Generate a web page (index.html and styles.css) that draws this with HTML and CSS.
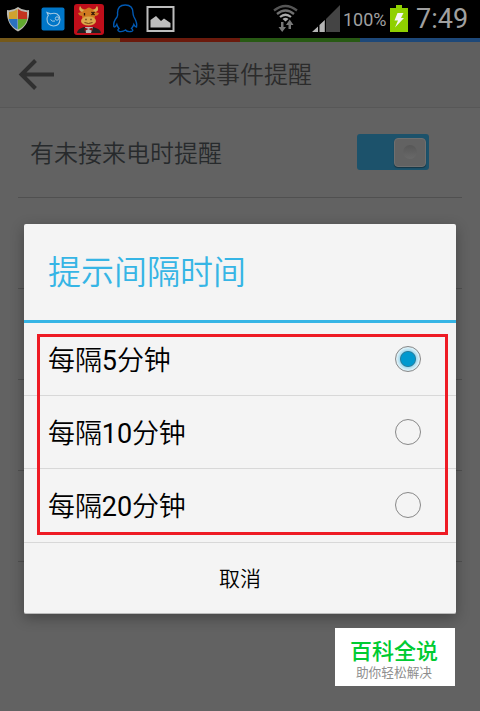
FILE: index.html
```
<!DOCTYPE html>
<html lang="zh-CN">
<head>
	<meta charset="utf-8">
	<title>未读事件提醒</title>
	<link rel="stylesheet" href="styles.css">
</head>
<body>
	<div class="statusbar">
		<svg class="status-left" width="180" height="38" viewBox="0 0 180 38">
			<!-- shield -->
			<path d="M18 7 Q23 11 29 10 Q30 25 18 31.500 Q6 25 7 10 Q13 11 18 7Z" fill="#b9b9b2"/>
			<path d="M17.500 9 Q13 12.500 9 12 L8.800 19 H17.500Z" fill="#d0a22f"/>
			<path d="M18 9 Q22 12.500 27 12 L27.200 19 H18Z" fill="#c4331e"/>
			<path d="M8.800 19 H17.500 V29.500 Q10 26 8.800 19Z" fill="#2a72c0"/>
			<path d="M18 19 H27.200 Q26 26 18 29.500Z" fill="#62a82f"/>
			<!-- blue app -->
			<rect x="41.500" y="7.500" width="23" height="23" rx="2" fill="#0076c8"/>
			<path d="M47 12.500 L50.500 13.800 Q59 11.500 60 19.500 Q59.500 26 53.500 26 Q47 25.500 47 19 Q47 17 48.300 15.500 Z" fill="none" stroke="#a3c9e2" stroke-width="1.100"/>
			<circle cx="57" cy="18.500" r="1.700" fill="none" stroke="#a3c9e2"/>
			<path d="M50.500 19.500 Q52 22 55 21" fill="none" stroke="#a3c9e2"/>
			<!-- bull -->
			<rect x="74" y="4" width="30" height="31" rx="3" fill="#bf0e1a"/>
			<path d="M77 33 Q77 29 84 27 H93 Q101 29 101 33Z" fill="#202020"/>
			<path d="M85 27 H93 L91 33 H86Z" fill="#bbb"/>
			<path d="M82 12 Q78 11 80 6 Q82 10 86 9 Q89 6 92 9 Q96 10 97 6 Q100 11 95 12 L99 13 Q98 16 95 16 L94 23 Q89 27 83 23 L82 16 Q79 16 78 13Z" fill="#d07a20"/>
			<path d="M80 6 Q78 11 82 12 L84 10 Q81 9 80 6 M97 6 Q100 11 95 12 L93 10 Q96 9 97 6" fill="#d8ad58"/>
			<ellipse cx="88.500" cy="21" rx="7.500" ry="4.500" fill="#dca84a"/>
			<path d="M84.500 13 V15.500 M91.500 12 L94.500 15 M94.500 12 L91.500 15 M85.500 19.500 H86.500 M90.500 19.500 H91.500" stroke="#301208" stroke-width="1.300"/>
			<path d="M84.500 22.500 Q88.500 24.500 92.500 22.500" stroke="#754018" fill="none"/>
			<path d="M84.500 27.500 L88.500 29 L84.500 31Z M92.500 27.500 L88.500 29 L92.500 31Z" fill="#8c0d12"/>
			<!-- penguin -->
			<path d="M117.500 13 C117.500 7 121 5 125.300 5 C130 5 133 8 133 13 Q133 15 134 17 Q137.500 23 136.500 27 Q135 27 133.800 24.500 Q133 27 131.500 28.500 Q134.500 31 131 31.500 Q127 32 125.500 30 Q123 32 119.500 31.500 Q116.500 30.500 119 28.500 Q117.500 27 116.800 24.500 Q115 28 113.800 26.500 Q113 22 117 17 Q118 15 117.500 13Z" fill="none" stroke="#0059b3" stroke-width="1.400"/>
			<!-- picture -->
			<rect x="147.500" y="7" width="26" height="24" fill="none" stroke="#bdbdbd" stroke-width="2"/>
			<path d="M150.500 27.500 V20 L156 16 L161 21 L164 18.500 L170.500 23 V27.500Z" fill="#bdbdbd"/>
		</svg>
		<div class="status-right">
			<svg class="wifi" width="28" height="38" viewBox="0 0 28 38">
				<g fill="none" stroke="#555" stroke-width="2.300">
					<path d="M2 10.500 Q13.500 1.500 25 10.500"/>
					<path d="M5 14 Q13.500 7 22 14" stroke="#707070"/>
				</g>
				<path d="M8 17 Q13.500 12.500 19 17" fill="none" stroke="#aaa" stroke-width="2.200"/>
				<path d="M10.500 19 Q13.500 16.500 16.500 19 L13.500 21.500Z" fill="#aaa"/>
				<path d="M9 22 H11.500 V27 H14 L10.200 32 L6.500 27 H9Z M16.500 29 V25 H14 L17.700 19.500 L21.500 25 H19 V29Z" fill="#777"/>
			</svg>
			<svg class="signal" width="28" height="38" viewBox="0 0 28 38">
				<path d="M28 5 V32 H14 V19Z" fill="#444"/>
				<path d="M0 32 L6 26.500 V32Z M7.500 32 V25 L9 23.500 V32Z M9 32 V23.500 L12.800 20 V32Z" fill="#b5b5b5"/>
			</svg>
			<span class="percent">100%</span>
			<svg class="battery" width="18" height="38" viewBox="0 0 18 38">
				<path d="M6 5 H12 V8 H18 V32 H0 V8 H6Z" fill="#8fd000"/>
				<path d="M7.500 13 H13.500 L11 18 H14 L5 27.500 L8 20.500 H4.500Z" fill="#f4f4f4"/>
			</svg>
			<span class="clock">7:49</span>
		</div>
	</div>

	<div class="stripes">
		<span class="yellow"></span>
		<span class="red"></span>
		<span class="green"></span>
		<span class="blue"></span>
	</div>

	<div class="header">
		<svg class="back" width="36" height="32" viewBox="0 0 36 32">
			<path d="M17.500 1.500 L3.500 15.500 L17.500 29.500 M3 15.500 H36" fill="none" stroke="#303030" stroke-width="4"/>
		</svg>
		<h1>未读事件提醒</h1>
	</div>

	<div class="settings">
		<div class="setting first">
			<span>有未接来电时提醒</span>
			<div class="switch"><div class="knob"><i></i></div></div>
		</div>
		<div class="setting"></div>
		<div class="setting"></div>
		<div class="setting"></div>
		<div class="setting"></div>
	</div>

	<div class="dialog">
		<h2>提示间隔时间</h2>
		<div class="option"><span>每隔<b>5</b>分钟</span><i class="radio checked"></i></div>
		<div class="option"><span>每隔<b>10</b>分钟</span><i class="radio"></i></div>
		<div class="option"><span>每隔<b>20</b>分钟</span><i class="radio"></i></div>
		<div class="cancel">取消</div>
	</div>

	<div class="marker"></div>

	<div class="logo">
		<b>百科全说</b>
		<span>助你轻松解决</span>
	</div>
</body>
</html>
```
FILE: styles.css
```
* {
	box-sizing: border-box;
}
body {
	position: relative;
	margin: 0;
	width: 480px;
	height: 711px;
	overflow: hidden;
	background: #626262;
	font-family: Roboto, "Noto Sans CJK SC", sans-serif;
}
h1, h2 {
	margin: 0;
	font-weight: 350;
}
.statusbar {
	display: flex;
	justify-content: space-between;
	height: 38px;
	background: #000;
}
.status-right {
	display: flex;
	align-items: center;
	width: 208px;
	color: #a0a0a0;
}
.signal {
	margin-left: 12px;
}
.percent {
	width: 42px;
	margin-left: 3px;
	font-size: 18px;
}
.battery {
	margin-left: 5px;
}
.clock {
	margin-left: 8px;
	font-size: 27px;
}
.stripes {
	display: flex;
	height: 4px;
}
.stripes span {
	flex: 1;
}
.yellow {
	background: #75591a;
}
.red {
	background: #6b1a0c;
}
.green {
	background: #285a14;
}
.blue {
	background: #1d4879;
}
.header {
	display: flex;
	align-items: center;
	height: 66px;
	padding-left: 18px;
	background: #5f5f5f;
	border-bottom: 1px solid #575757;
}
.header h1 {
	margin-left: 114px;
	font-size: 24px;
	line-height: 36px;
	color: #2b2b2b;
}
.settings {
	padding: 0 18px;
}
.setting {
	display: flex;
	align-items: center;
	justify-content: space-between;
	height: 91px;
	padding: 0 33px 0 12px;
	border-bottom: 1px solid #505050;
	font-size: 24px;
	font-weight: 350;
	color: #272a2c;
}
.setting.first {
	height: 90px;
	padding-bottom: 2px;
}
.switch {
	display: flex;
	justify-content: flex-end;
	width: 72px;
	height: 36px;
	padding: 4px 3px;
	border-radius: 3px;
	background: #1c526b;
}
.knob {
	display: flex;
	align-items: center;
	justify-content: center;
	width: 32px;
	height: 29px;
	border: 1px solid #6f6f6f;
	border-radius: 4px;
	background: #626262;
	box-shadow: 0 1px 1px #183644;
}
.knob i {
	width: 14px;
	height: 14px;
	border-radius: 50%;
	background: linear-gradient(#575757, #696969);
}
.dialog {
	position: absolute;
	left: 24px;
	top: 224px;
	width: 432px;
	height: 390px;
	border-radius: 2px;
	background: #f4f4f4;
	border-bottom: 1px solid #bbb;
	box-shadow: 0 4px 14px rgba(0, 0, 0, 0.3);
}
.dialog h2 {
	height: 99px;
	padding-left: 24px;
	border-bottom: 3px solid #36b5e5;
	font-size: 33px;
	line-height: 98px;
	color: #36b5e5;
}
.option {
	display: flex;
	align-items: center;
	justify-content: space-between;
	height: 73px;
	padding: 0 35px 0 24px;
	border-bottom: 1px solid #d8d8d8;
	font-size: 27px;
	color: #000;
}
.option span {
	padding-bottom: 2px;
	font-weight: 350;
	letter-spacing: -0.1px;
}
.option b {
	font-weight: 400;
}
.radio {
	width: 26px;
	height: 26px;
	border: 1.500px solid #888;
	border-radius: 50%;
}
.checked {
	background: radial-gradient(circle, #0099cf 0 6.500px, #287e9e 7.500px, #a9dcef 8.500px, #d9eff7 11px);
}
.cancel {
	height: 71px;
	border-top: 1px solid #d8d8d8;
	margin-top: 0;
	font-size: 21px;
	font-weight: 350;
	line-height: 73px;
	text-align: center;
}
.option:nth-child(4) {
	border-bottom-color: transparent;
}
.marker {
	position: absolute;
	left: 37px;
	top: 334px;
	width: 411px;
	height: 201px;
	border: 3px solid #ee1b24;
}
.logo {
	position: absolute;
	left: 335px;
	top: 628px;
	display: flex;
	flex-direction: column;
	align-items: center;
	width: 120px;
	height: 58px;
	padding: 9px 2px 0 0;
	background: #fff;
}
.logo b {
	font-size: 22px;
	font-weight: 500;
	line-height: 29px;
	color: #00cb32;
}
.logo span {
	font-size: 12.700px;
	line-height: 14px;
	color: #8e8e8e;
}
```
